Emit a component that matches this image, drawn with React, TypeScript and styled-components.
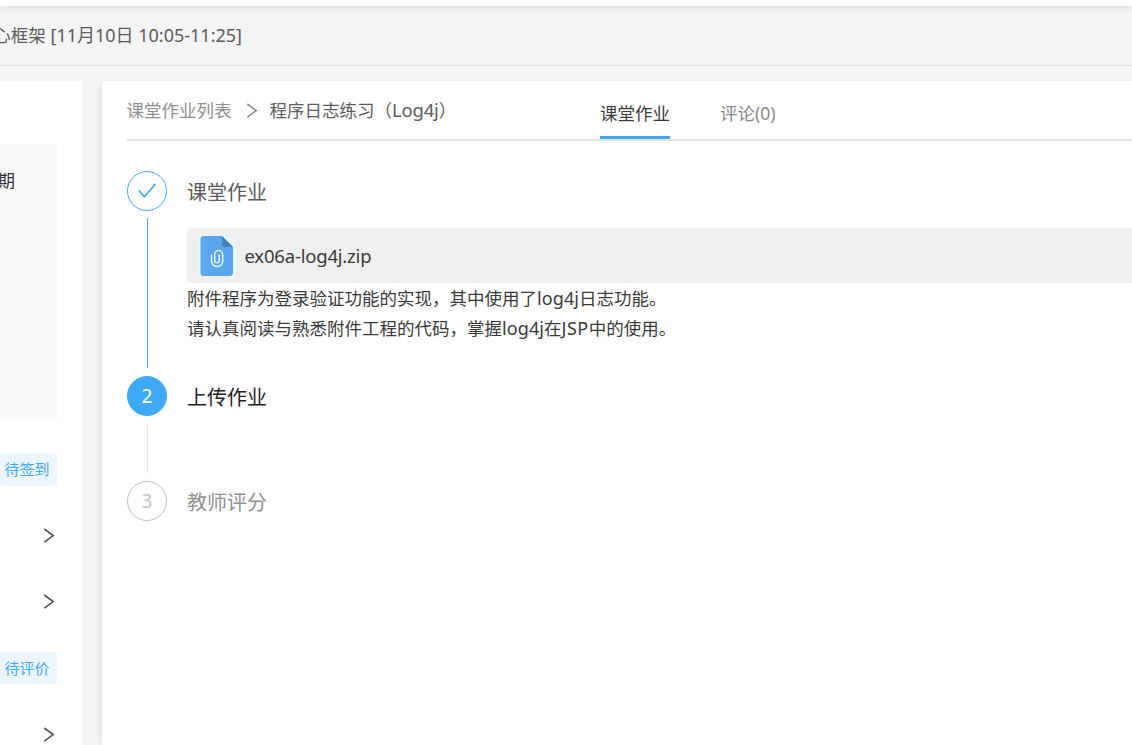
import React from 'react';
import styled, { createGlobalStyle } from 'styled-components';

const GlobalStyle = createGlobalStyle`
  * { box-sizing: border-box; }
  html, body { margin: 0; padding: 0; background: #f4f4f4; overflow: hidden; }
  body { font-family: "Noto Sans", "Noto Sans CJK SC", sans-serif; font-weight: 400; }
`;

const Page = styled.div`
  width: 100%;
  height: 745px;
  display: flex;
  flex-direction: column;
  overflow: hidden;
`;

const TopBar = styled.div`
  flex: none;
  height: 6px;
  background: #fff;
  box-shadow: 0 1px 8px rgba(0, 0, 0, 0.15);
`;

const CourseHeader = styled.header`
  flex: none;
  height: 60px;
  border-bottom: 1px solid #dcdcdc;
`;

const CourseTitle = styled.div`
  display: flex;
  justify-content: flex-end;
  width: 242px;
  line-height: 58px;
  font-size: 17.5px;
  color: #5c5c5c;
`;

const Text = styled.span<{ $tracking?: number; $size?: number }>`
  white-space: pre;
  letter-spacing: ${(p) => p.$tracking ?? 0}px;
  ${(p) => (p.$size ? `font-size: ${p.$size}px;` : '')}
`;

const Body = styled.div`
  flex: 1;
  min-height: 0;
  display: flex;
  gap: 20px;
  padding-top: 15px;
`;

const Sidebar = styled.aside`
  flex: none;
  width: 82px;
  background: #fff;
  display: flex;
  flex-direction: column;
  padding: 63px 25px 0 0;
`;

const SummaryCard = styled.div`
  flex: none;
  height: 275px;
  background: #fafafa;
  padding-top: 21px;
  display: flex;
  justify-content: flex-end;
  padding-right: 42px;
  font-size: 17.5px;
  line-height: 30px;
  color: #333;
`;

const Tag = styled.div<{ $top: number; $height: number }>`
  flex: none;
  margin-top: ${(p) => p.$top}px;
  height: ${(p) => p.$height}px;
  line-height: ${(p) => p.$height}px;
  padding-left: 4.5px;
  background: #ecf6ff;
  border-radius: 4px;
  font-size: 15px;
  color: #3fa9f8;
`;

const Arrow = styled.div<{ $top: number }>`
  flex: none;
  height: 16px;
  margin-top: ${(p) => p.$top}px;
  display: flex;
  justify-content: flex-end;
  padding-right: 2px;
`;

const Panel = styled.main`
  flex: 1;
  min-width: 0;
  background: #fff;
  border-top-left-radius: 4px;
  box-shadow: 0 2px 6px rgba(0, 0, 0, 0.1);
  padding-left: 25px;
`;

const PanelHead = styled.div`
  height: 60px;
  border-bottom: 2px solid #e4e4e4;
  display: flex;
`;

const Breadcrumb = styled.nav`
  width: 473px;
  display: flex;
  align-items: center;
  height: 60px;
  font-size: 17.5px;
  line-height: 26px;
  color: #5c5c5c;
`;

const Crumb = styled.span`
  color: #909090;
  margin: -2px 14px 0 -0.5px;
`;

const CrumbCurrent = styled.span`
  display: flex;
  margin: -2px 0 0 12px;
`;

const Tabs = styled.div`
  display: flex;
  gap: 50px;
`;

const Tab = styled.div<{ $active?: boolean }>`
  height: 58px;
  line-height: 64px;
  font-size: 17.5px;
  white-space: nowrap;
  color: ${(p) => (p.$active ? '#3a3a3a' : '#888')};
  border-bottom: 3px solid ${(p) => (p.$active ? '#3fa9f8' : 'transparent')};
`;

const Steps = styled.div`
  padding-top: 30px;
`;

const Step = styled.section<{ $height: number }>`
  display: flex;
  gap: 20px;
  height: ${(p) => p.$height}px;
`;

const Rail = styled.div`
  width: 40px;
  display: flex;
  flex-direction: column;
  align-items: center;
`;

type State = 'done' | 'active' | 'wait';

const Circle = styled.div<{ $state: State }>`
  flex: none;
  width: 40px;
  height: 40px;
  border-radius: 50%;
  display: flex;
  align-items: center;
  justify-content: center;
  border: 1px solid ${(p) => (p.$state === 'wait' ? '#bfbfbf' : '#3fa9f8')};
  background: ${(p) => (p.$state === 'active' ? '#3fa9f8' : '#fff')};
  color: ${(p) => (p.$state === 'active' ? '#fff' : '#c4c4c4')};
  font-size: 19px;
  line-height: 40px;
`;

const Line = styled.div<{ $done?: boolean }>`
  flex: 1;
  width: 1px;
  margin: 7px 0 8px 1px;
  background: ${(p) => (p.$done ? '#3fa9f8' : '#e4e4e4')};
`;

const StepMain = styled.div`
  flex: 1;
  min-width: 0;
`;

const StepTitle = styled.div<{ $color: string }>`
  height: 40px;
  line-height: 44px;
  font-size: 20px;
  color: ${(p) => p.$color};
`;

const Attachment = styled.div`
  margin-top: 17px;
  height: 55px;
  background: #efefef;
  border-radius: 5px 0 0 5px;
  display: flex;
  align-items: center;
  padding-left: 10px;
  gap: 7.5px;
  font-size: 18.5px;
  color: #3a3a3a;
`;

const Description = styled.div`
  font-size: 17.5px;
  line-height: 30px;
  color: #3a3a3a;
`;

const DescriptionLine = styled.div`
  display: flex;
`;

const Chevron = ({ color }: { color: string }) => (
  <svg width="12" height="16" viewBox="0 0 12 16" fill="none" stroke={color} strokeWidth="1.6">
    <path d="M1.3 1 10.2 7.6 1.3 14.2" />
  </svg>
);

const FileIcon = () => (
  <svg width="40" height="42" viewBox="0 0 40 42" fill="none">
    <rect x="0.5" y="1" width="38.5" height="40" rx="4" fill="#e8f6ff" />
    <path d="M7 1H25l11 11v25.5a3.5 3.5 0 0 1-3.5 3.5h-25.5A3.5 3.5 0 0 1 3.5 37.5v-33A3.5 3.5 0 0 1 7 1Z" fill="#5aa7ef" />
    <path d="M25 1l11 11h-9a2 2 0 0 1-2-2Z" fill="#4482bb" />
    <path
      d="M14.5 20v6a5.6 5.6 0 0 0 11.2 0v-6.4a4 4 0 0 0-8 0v6a2.3 2.3 0 0 0 4.6 0V20"
      stroke="#e8f4ff"
      strokeWidth="1.5"
      strokeLinecap="round"
    />
  </svg>
);

const Check = () => (
  <svg width="20" height="16" viewBox="0 0 20 16" fill="none" stroke="#3fa9f8" strokeWidth="1.7">
    <path d="M1.8 7.3 7.3 13.7 18.5 1" />
  </svg>
);

export default function App() {
  return (
    <Page>
      <GlobalStyle />
      <TopBar />
      <CourseHeader>
        <CourseTitle>
          <Text>心框架</Text>
          <Text $size={18}> [11月10日 10:05-11:25]</Text>
        </CourseTitle>
      </CourseHeader>
      <Body>
        <Sidebar>
          <SummaryCard>
            <Text>期</Text>
          </SummaryCard>
          <Tag $top={34} $height={33}>待签到</Tag>
          <Arrow $top={42}><Chevron color="#555" /></Arrow>
          <Arrow $top={50}><Chevron color="#555" /></Arrow>
          <Tag $top={42} $height={32}>待评价</Tag>
          <Arrow $top={43}><Chevron color="#555" /></Arrow>
        </Sidebar>
        <Panel>
          <PanelHead>
            <Breadcrumb>
              <Crumb>课堂作业列表</Crumb>
              <Chevron color="#8c8c8c" />
              <CrumbCurrent>
                <Text>程序日志练习（</Text>
                <Text $size={18.5} $tracking={-0.2}>Log4j</Text>
                <Text>）</Text>
              </CrumbCurrent>
            </Breadcrumb>
            <Tabs>
              <Tab $active>课堂作业</Tab>
              <Tab>评论<Text>(0)</Text></Tab>
            </Tabs>
          </PanelHead>
          <Steps>
            <Step $height={205}>
              <Rail>
                <Circle $state="done"><Check /></Circle>
                <Line $done />
              </Rail>
              <StepMain>
                <StepTitle $color="#5c5c5c">课堂作业</StepTitle>
                <Attachment>
                  <FileIcon />
                  <Text $tracking={-0.2}>ex06a-log4j.zip</Text>
                </Attachment>
                <Description>
                  <DescriptionLine>
                    <Text>附件程序为登录验证功能的实现，其中使用了</Text>
                    <Text $size={18} $tracking={0.1}>log4j</Text>
                    <Text>日志功能。</Text>
                  </DescriptionLine>
                  <DescriptionLine>
                    <Text>请认真阅读与熟悉附件工程的代码，掌握</Text>
                    <Text $size={18} $tracking={0.1}>log4j</Text>
                    <Text>在</Text>
                    <Text $size={18} $tracking={0.5}>JSP</Text>
                    <Text>中的使用。</Text>
                  </DescriptionLine>
                </Description>
              </StepMain>
            </Step>
            <Step $height={105}>
              <Rail>
                <Circle $state="active">2</Circle>
                <Line />
              </Rail>
              <StepMain>
                <StepTitle $color="#222">上传作业</StepTitle>
              </StepMain>
            </Step>
            <Step $height={40}>
              <Rail>
                <Circle $state="wait">3</Circle>
              </Rail>
              <StepMain>
                <StepTitle $color="#909090">教师评分</StepTitle>
              </StepMain>
            </Step>
          </Steps>
        </Panel>
      </Body>
    </Page>
  );
}
